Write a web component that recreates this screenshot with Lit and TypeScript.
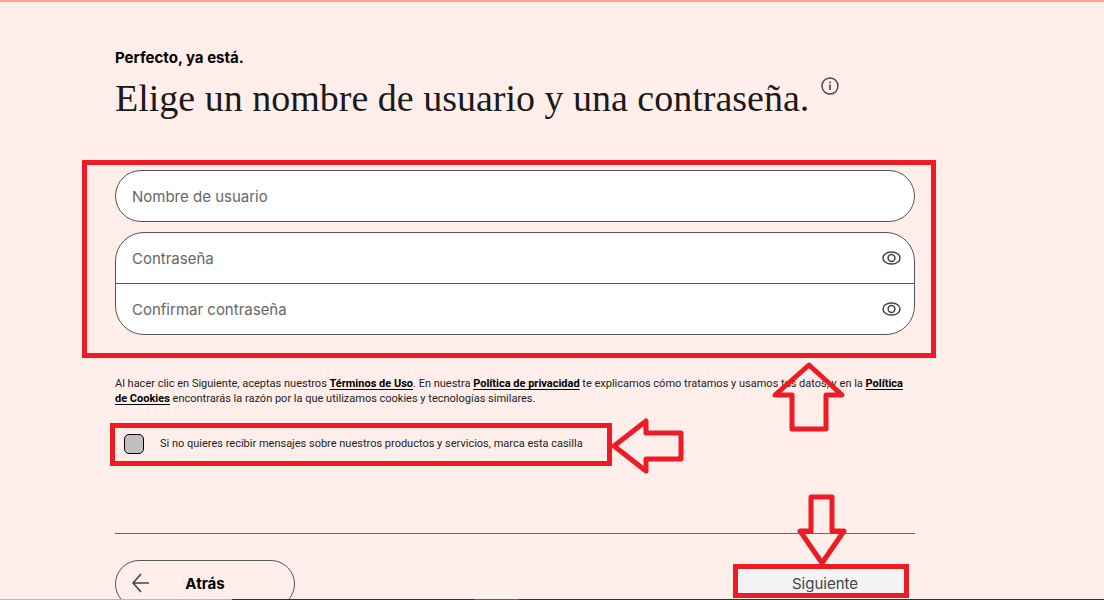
import { LitElement, html, css, svg } from "lit";
import { customElement } from "lit/decorators.js";

const eye = svg`
  <svg viewBox="0 0 20 14" width="20" height="14" fill="none" stroke="#444" aria-hidden="true">
    <rect x="1" y="1" width="17" height="12" rx="8" ry="6" stroke-width="1.5" />
    <circle cx="9.5" cy="7" r="3.4" stroke-width="1.5" />
  </svg>`;

@customElement("app-root")
export class AppRoot extends LitElement {
  static styles = css`
    :host {
      display: block;
      box-sizing: border-box;
      height: 100vh;
      overflow: hidden;
      background: #ffeeea;
      border-top: 2px solid #ffa28f;
      color: #000;
      font-family: Inter, "Liberation Sans", sans-serif;
      font-size: 15px;
    }
    * { box-sizing: border-box; }
    main { margin: 0 189px 0 115px; padding-top: 44px; }
    .eyebrow { margin: 0; line-height: 24px; font-weight: 700; }
    .title-row { display: flex; align-items: flex-start; gap: 12px; padding-top: 4px; }
    h1 {
      margin: 0;
      font: 300 38px/48px "Liberation Serif", serif;
      color: #1a1a1a;
      white-space: nowrap;
    }
    .info { padding: 3px 0 0; border: 0; background: none; line-height: 0; }
    .fields { position: relative; display: grid; gap: 10px; margin-top: 48px; }
    .box {
      display: flex;
      align-items: center;
      height: 52px;
      background: #fff;
      border: 1px solid #555;
      border-radius: 26px;
      overflow: hidden;
    }
    .pair { display: block; height: auto; border-radius: 29px; }
    .line { display: flex; align-items: center; height: 50px; }
    .line + .line { border-top: 1px solid #555; height: 51px; }
    input.text {
      flex: 1;
      min-width: 0;
      height: 100%;
      padding: 0 16px;
      border: 0;
      outline: 0;
      background: none;
      font: inherit;
      color: #000;
    }
    input.text::placeholder { color: #666; opacity: 1; }
    .peek { padding: 0 12px 0 0; border: 0; background: none; line-height: 0; }
    .legal, .consent { font-family: Roboto, "Liberation Sans", sans-serif; font-size: 11px; color: #222; }
    .legal { margin: 41px 0 0; line-height: 15px; }
    .legal a { color: #000; font-weight: 700; text-underline-offset: 2px; }
    .consent {
      position: relative;
      display: flex;
      align-items: center;
      width: fit-content;
      gap: 16px;
      margin: 28px 0 0 9px;
      line-height: 20px;
    }
    .tick {
      appearance: none;
      width: 20px;
      height: 20px;
      margin: 0;
      border: 1px solid #000;
      border-radius: 5px;
      background: #bfbfbf;
    }
    .actions {
      display: flex;
      justify-content: space-between;
      margin-top: 79px;
      padding-top: 26px;
      border-top: 1px solid #666;
    }
    .back, .next {
      position: relative;
      width: 180px;
      height: 48px;
      padding: 0;
      border-radius: 24px;
      font: inherit;
      line-height: 44px;
    }
    .back { border: 1px solid #555; background: none; font-weight: 700; color: #000; }
    .back svg { position: absolute; left: 16px; top: 12px; }
    .next { border: 0; background: #f3f3f3; color: #444; }
    .frame { position: absolute; border: 5px solid #ed1c24; pointer-events: none; }
    .frame-fields { inset: -10px -21px -23px -33px; }
    .frame-consent { inset: -11px -29px -12px -14px; }
    .frame-next { left: -2px; right: 6px; top: 4px; height: 34px; }
    .arrow { position: absolute; fill: none; stroke: #ed1c24; stroke-width: 5; stroke-linejoin: round; pointer-events: none; }
    .arrow-fields { right: 68px; top: 190px; }
    .arrow-consent { left: 100%; top: -18px; margin-left: 27px; }
    .arrow-next { left: 62px; top: -67px; }
    .strip { position: fixed; left: 0; right: 0; bottom: 0; display: flex; height: 1px; background: #29313a; }
    .strip-light { width: 21%; background: #bcb5b5; }
    .strip-mid { width: 4%; margin-left: 22%; background: #5d6269; }
  `;

  private field(id: string, label: string) {
    return html`<div class="line">
      <input class="text" id=${id} type="password" placeholder=${label} aria-label=${label} />
      <button class="peek" type="button" aria-label="Mostrar">${eye}</button>
    </div>`;
  }

  render() {
    return html`
      <main>
        <p class="eyebrow">Perfecto, ya está.</p>
        <div class="title-row">
          <h1>Elige un nombre de usuario y una contraseña.</h1>
          <button class="info" type="button" aria-label="Información">
            <svg viewBox="0 0 18 18" width="18" height="18" fill="none" stroke="#444" stroke-width="1.4">
              <circle cx="9" cy="9" r="8" />
              <path d="M9 7.5V13M9 4.6V6.2" stroke-width="1.6" />
            </svg>
          </button>
        </div>
        <form @submit=${(e: Event) => e.preventDefault()}>
          <div class="fields">
            <div class="box">
              <input class="text" id="user" type="text" placeholder="Nombre de usuario" aria-label="Nombre de usuario" />
            </div>
            <div class="box pair">
              ${this.field("pass", "Contraseña")} ${this.field("confirm", "Confirmar contraseña")}
            </div>
            <div class="frame frame-fields"></div>
            <svg class="arrow arrow-fields" viewBox="0 0 76 72" width="76" height="72">
              <path d="M38 5L71 35H55V69H21V35H4Z" />
            </svg>
          </div>
          <p class="legal">
            Al hacer clic en Siguiente, aceptas nuestros <a href="#terminos">Términos de Uso</a>. En nuestra
            <a href="#privacidad">Política de privacidad</a> te explicamos cómo tratamos y usamos tus datos, y en la
            <a href="#cookies">Política de Cookies</a> encontrarás la razón por la que utilizamos cookies y tecnologías similares.
          </p>
          <div class="consent">
            <input class="tick" id="optout" type="checkbox" />
            <label for="optout">Si no quieres recibir mensajes sobre nuestros productos y servicios, marca esta casilla</label>
            <div class="frame frame-consent"></div>
            <svg class="arrow arrow-consent" viewBox="0 0 74 60" width="74" height="60">
              <path d="M4 30L36 5V17H71V43H36V55Z" />
            </svg>
          </div>
          <div class="actions">
            <button class="back" type="button">
              <svg viewBox="0 0 18 20" width="18" height="20" fill="none" stroke="#444" stroke-width="1.6">
                <path d="M17 10H1M9 1L1 10L9 19" />
              </svg>
              Atrás
            </button>
            <button class="next" type="submit">
              Siguiente
              <span class="frame frame-next"></span>
              <svg class="arrow arrow-next" viewBox="0 0 50 72" width="50" height="72">
                <path d="M14 4H35V38H47L25 70L3 38H14Z" />
              </svg>
            </button>
          </div>
        </form>
      </main>
      <div class="strip"><span class="strip-light"></span><span class="strip-mid"></span></div>
    `;
  }
}
